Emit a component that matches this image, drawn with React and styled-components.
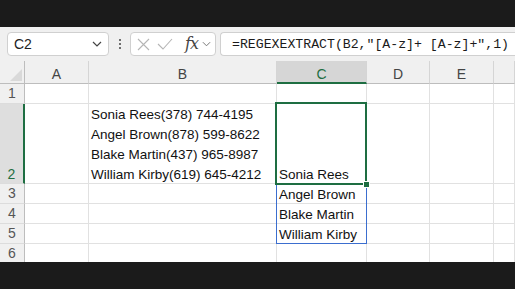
import React from 'react'
import styled, { createGlobalStyle } from 'styled-components'

const GlobalStyle = createGlobalStyle`
    html, body {
        margin: 0;
        padding: 0;
        background: #1b1b1b;
        font-family: 'Liberation Sans', Arial, sans-serif;
        overflow: hidden;
    }
`

const Page = styled.div`
    width: 515px;
    height: 289px;
    display: flex;
    flex-direction: column;
    background: #1b1b1b;
`

const Band = styled.div`
    height: 27px;
    flex: none;
`

const Panel = styled.div`
    height: 235px;
    background: #f0f0f0;
    display: flex;
    flex-direction: column;
    overflow: hidden;
`

const Toolbar = styled.div`
    display: flex;
    align-items: center;
    padding: 5px 0 5px 7px;
    height: 24px;
    flex: none;
`

const Box = styled.div`
    box-sizing: border-box;
    height: 24px;
    background: #fff;
    border: 1px solid #d0d0d0;
    border-radius: 4px;
    display: flex;
    align-items: center;
`

const NameBox = styled(Box)`
    width: 102px;
    padding: 0 6px 0 6px;
    justify-content: space-between;
    font-size: 14px;
    color: #222;
`

const Dots = styled.div`
    width: 21px;
    display: flex;
    flex-direction: column;
    align-items: center;
    gap: 2px;

    span {
        width: 2px;
        height: 2px;
        background: #444;
        border-radius: 1px;
    }
`

const FxBox = styled(Box)`
    width: 86px;
    padding: 0 3px 0 6px;
    gap: 7px;
`

const Fx = styled.span`
    font-family: 'DejaVu Serif', 'Liberation Serif', serif;
    font-style: italic;
    font-size: 16px;
    color: #444;
    margin: 0 -3px 2px 5px;
    letter-spacing: -1px;
`

const FormulaBox = styled(Box)`
    margin-left: 4px;
    flex: 1;
    min-width: 0;
    border-right: none;
    border-radius: 4px 0 0 4px;
    padding-left: 11px;
    font-family: 'Liberation Mono', 'DejaVu Sans Mono', monospace;
    font-size: 13.2px;
    color: #1a1a1a;
    white-space: nowrap;
    overflow: hidden;
`

const Sheet = styled.div`
    display: grid;
    grid-template-columns: 25px 64px 188px 90px 63px 64px 1fr;
    grid-template-rows: 23px 20px 80px 20px 20px 20px 20px;
    height: 201px;
    overflow: hidden;
    font-size: 13.5px;
`

const Corner = styled.div`
    grid-row: 1;
    grid-column: 1;
    box-sizing: border-box;
    border-right: 1px solid #bdbdbd;
    border-bottom: 1px solid #bdbdbd;
    position: relative;

    &::after {
        content: '';
        position: absolute;
        right: 2px;
        bottom: 2px;
        border-style: solid;
        border-width: 0 0 12px 12px;
        border-color: transparent transparent #d9d9d9 transparent;
    }
`

const ColHead = styled.div`
    grid-row: 1;
    grid-column: ${p => p.$col};
    box-sizing: border-box;
    display: flex;
    align-items: center;
    justify-content: center;
    padding-top: 4px;
    font-size: 14px;
    color: ${p => (p.$active ? '#1e6e42' : '#444')};
    background: ${p => (p.$active ? '#d6d6d6' : 'transparent')};
    border-right: 1px solid #d5d5d5;
    border-bottom: ${p => (p.$active ? '2px solid #1e6e42' : '1px solid #bdbdbd')};
`

const RowHead = styled.div`
    grid-row: ${p => p.$row};
    grid-column: 1;
    box-sizing: border-box;
    display: flex;
    align-items: flex-end;
    justify-content: center;
    padding-bottom: ${p => (p.$active ? '0' : '1px')};
    line-height: 18px;
    font-size: 14px;
    color: ${p => (p.$active ? '#1e6e42' : '#555')};
    background: ${p => (p.$active ? '#dedede' : '#f0f0f0')};
    border-right: ${p => (p.$active ? '2px solid #1e6e42' : '1px solid #bdbdbd')};
    border-bottom: 1px solid #dcdcdc;
`

const Cell = styled.div`
    grid-row: ${p => p.$row};
    grid-column: ${p => p.$col};
    box-sizing: border-box;
    background: #fff;
    border-right: 1px solid #e1e1e1;
    border-bottom: 1px solid #e1e1e1;
    padding: 0 2px;
    display: flex;
    flex-direction: column;
    justify-content: flex-end;
    color: #111;
    white-space: nowrap;
    line-height: 20px;

    span:last-child {
        margin-bottom: -2px;
    }
`

const Selection = styled.div`
    grid-column: 4;
    grid-row: 3;
    margin: -2px 0 -1px -2px;
    border: 2px solid #1e6e42;
    position: relative;
    z-index: 2;
    pointer-events: none;

    &::after {
        content: '';
        position: absolute;
        right: -5px;
        bottom: -5px;
        width: 5px;
        height: 5px;
        background: #1e6e42;
        border: 1px solid #fff;
    }
`

const Spill = styled.div`
    grid-column: 4;
    grid-row: 4 / span 3;
    margin: 0 0 0 -1px;
    border: 1px solid #3b6ecf;
    border-top: none;
    z-index: 1;
    pointer-events: none;
`

const columns = ['A', 'B', 'C', 'D', 'E', 'F']

const rows = [
    { n: 1, cells: {} },
    {
        n: 2,
        cells: {
            B: [
                'Sonia Rees(378) 744-4195',
                'Angel Brown(878) 599-8622',
                'Blake Martin(437) 965-8987',
                'William Kirby(619) 645-4212',
            ],
            C: ['Sonia Rees'],
        },
    },
    { n: 3, cells: { C: ['Angel Brown'] } },
    { n: 4, cells: { C: ['Blake Martin'] } },
    { n: 5, cells: { C: ['William Kirby'] } },
    { n: 6, cells: {} },
]

function Chevron() {
    return (
        <svg width="10" height="6" viewBox="0 0 10 6">
            <path d="M1 1l4 4 4-4" fill="none" stroke="#444" strokeWidth="1.2" />
        </svg>
    )
}

export default function App() {
    return (
        <Page>
            <GlobalStyle />
            <Band />
            <Panel>
                <Toolbar>
                    <NameBox>
                        <span>C2</span>
                        <Chevron />
                    </NameBox>
                    <Dots>
                        <span />
                        <span />
                        <span />
                    </Dots>
                    <FxBox>
                        <svg width="13" height="13" viewBox="0 0 13 13">
                            <path d="M1 1l11 11M12 1L1 12" stroke="#b5b5b5" strokeWidth="1.1" />
                        </svg>
                        <svg width="16" height="12" viewBox="0 0 16 12">
                            <path d="M1 6l5 5 9-10" fill="none" stroke="#b5b5b5" strokeWidth="1.1" />
                        </svg>
                        <Fx>fx</Fx>
                        <svg width="9" height="6" viewBox="0 0 10 6">
                            <path d="M1 1l4 4 4-4" fill="none" stroke="#777" strokeWidth="1.1" />
                        </svg>
                    </FxBox>
                    <FormulaBox>=REGEXEXTRACT(B2,"[A-z]+ [A-z]+",1)</FormulaBox>
                </Toolbar>
                <Sheet>
                    <Corner />
                    {columns.map((c, i) => (
                        <ColHead key={c} $col={i + 2} $active={c === 'C'}>
                            {c !== 'F' ? c : ''}
                        </ColHead>
                    ))}
                    {rows.map((row, r) => (
                        <React.Fragment key={row.n}>
                            <RowHead $row={r + 2} $active={row.n === 2}>
                                {row.n}
                            </RowHead>
                            {columns.map((c, i) => (
                                <Cell key={c} $row={r + 2} $col={i + 2}>
                                    {(row.cells[c] || []).map(line => (
                                        <span key={line}>{line}</span>
                                    ))}
                                </Cell>
                            ))}
                        </React.Fragment>
                    ))}
                    <Selection />
                    <Spill />
                </Sheet>
            </Panel>
            <Band />
        </Page>
    )
}
